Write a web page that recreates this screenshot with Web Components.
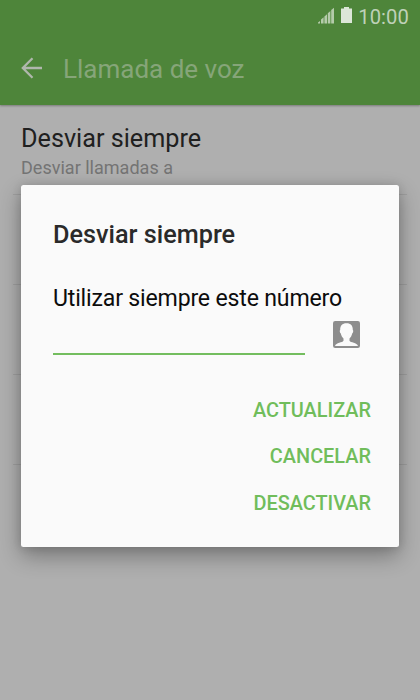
<!DOCTYPE html>
<html lang="es">
<head>
<meta charset="utf-8">
<title>Llamada de voz</title>
<style>
html,body{margin:0;height:100%;overflow:hidden}
body{background:#afafaf;font-family:Roboto,"Liberation Sans",sans-serif}
</style>
</head>
<body>
<call-screen></call-screen>
<script>
const define = (name, html) => customElements.define(name, class extends HTMLElement {
  constructor() {
    super();
    const t = document.createElement('template');
    t.innerHTML = html;
    this.attachShadow({mode: 'open'}).append(t.content.cloneNode(true));
  }
});

define('status-bar', `
<style>
:host{display:flex;justify-content:flex-end;height:32px;padding-right:11px;color:#bfd1b8;font-size:20.2px;line-height:34px;letter-spacing:.1px}
svg{display:block;margin-right:2px}
</style>
<svg width="38" height="32" viewBox="0 0 38 32">
<g fill="#b4cbaa"><path d="M0 23.500v-1l2-1.500v2.500z"/><path d="M3 23.500v-4l2.600-2.200v6.200z"/><path d="M6.400 23.500v-7l2.600-2.200v9.200z"/><path d="M9.800 23.500v-10.200l2.600-2.200v12.400z"/><path d="M13.200 23.500v-13.500l2.800-2.300v15.800z"/></g>
<path d="M23 8.500h3V7h5v1.500h3V23H23z" fill="#dce6d8"/>
</svg><span>10:00</span>`);

define('app-bar', `
<style>
:host{display:flex;align-items:center;height:71.500px;box-sizing:border-box;color:#86a579;font-size:26px}
svg{display:block;margin:0 21px 0 21px;flex:none}
span{line-height:30px;padding-top:2px}
</style>
<svg width="21" height="22" viewBox="0 0 21 22"><path d="M11.500 1.200L1.800 11l9.700 9.800M1.800 11H21" fill="none" stroke="#b0b7ad" stroke-width="2.300"/></svg>
<span><slot></slot></span>`);

define('setting-row', `
<style>
:host{display:block;height:90px;box-sizing:border-box;margin:0 13px;padding:19px 8px 0;border-bottom:1px solid #a0a0a0}
.t{font-size:25.200px;line-height:30px;color:#202020}
.s{font-size:18.050px;line-height:22px;color:#747474;margin-top:3px}
</style>
<div class="t"><slot name="title"></slot></div><div class="s"><slot></slot></div>`);

define('dialog-button', `
<style>
:host{display:block;height:46.400px;line-height:46.400px;font-size:19.900px;font-weight:500;color:#70bd5b;text-align:right}
</style><slot></slot>`);

define('number-field', `
<style>
:host{display:flex;height:45px;align-items:flex-start}
.line{width:252px;height:41px;border-bottom:2px solid #73bd5e;box-sizing:border-box}
svg{margin:7px 0 0 28px;display:block}
</style>
<div class="line"></div>
<svg width="27" height="27" viewBox="0 0 27 27"><rect width="27" height="27" rx="2.200" fill="#8d8d8d"/><path d="M13.500 2.300C9.200 2.300 7 5 7.200 9c-.8.300-.4 3 .6 3.600.5 2.200 1.500 3.900 2.700 5v2.200C9.500 21.800 3 21.500 2 25h23c-1-3.500-7.500-3.200-8.500-5.200v-2.200c1.200-1.100 2.200-2.800 2.700-5 1-.6 1.400-3.300.6-3.600.2-4-2-6.700-6.300-6.700z" fill="#fafafa"/></svg>`);

define('alert-dialog', `
<style>
:host{display:block;box-sizing:border-box;width:378px;height:362px;background:#fafafa;border-radius:2.500px;padding:35px 28px 0 32px;box-shadow:0 9px 22px rgba(0,0,0,.32),0 0 10px rgba(0,0,0,.14)}
h1{margin:0;font-size:25.250px;line-height:30px;font-weight:500;color:#2a2a2a}
p{margin:34px 0 0;font-size:23.100px;letter-spacing:-.18px;line-height:30px;color:#0c0c0c;white-space:nowrap}
.b{margin-top:29px}
</style>
<h1><slot name="title"></slot></h1>
<p><slot name="label"></slot></p>
<number-field></number-field>
<div class="b"><slot></slot></div>`);

define('call-screen', `
<style>
:host{display:block;position:relative;width:420px;height:700px;background:#afafaf;overflow:hidden}
header{background:#4e853a;height:105px;box-shadow:0 1px 2px rgba(0,0,0,.3)}
alert-dialog{position:absolute;left:21px;top:185px}
</style>
<header><status-bar></status-bar><app-bar>Llamada de voz</app-bar></header>
<main>
<setting-row><span slot="title">Desviar siempre</span>Desviar llamadas a</setting-row>
<setting-row></setting-row><setting-row></setting-row><setting-row></setting-row>
</main>
<alert-dialog>
<span slot="title">Desviar siempre</span><span slot="label">Utilizar siempre este número</span>
<dialog-button>ACTUALIZAR</dialog-button><dialog-button>CANCELAR</dialog-button><dialog-button>DESACTIVAR</dialog-button>
</alert-dialog>`);
</script>
</body>
</html>
